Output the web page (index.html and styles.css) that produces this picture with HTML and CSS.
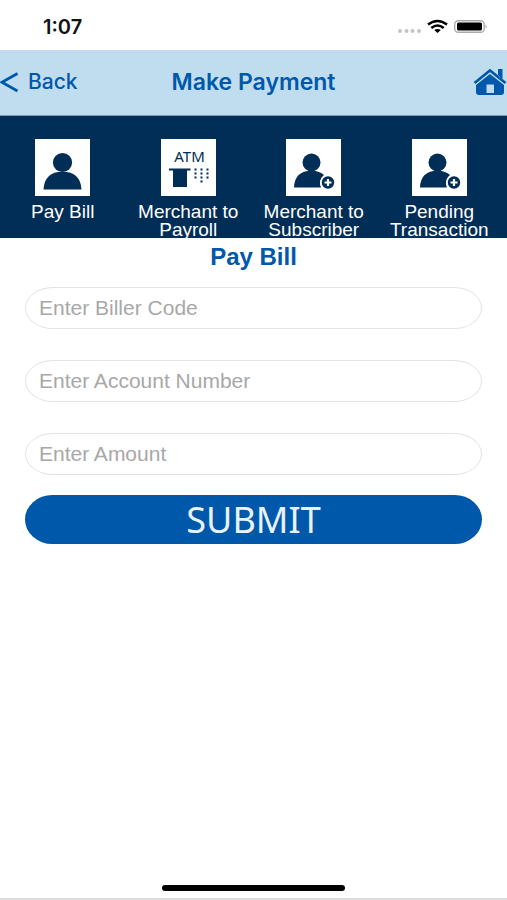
FILE: index.html
```html
<!DOCTYPE html>
<html lang="en">
<head>
<meta charset="utf-8">
<meta name="viewport" content="width=device-width, initial-scale=1">
<title>Make Payment</title>
<link rel="stylesheet" href="styles.css">
</head>
<body>
<div class="status">
  <span class="time">1:07</span>
  <svg class="signals" width="92" height="16" viewBox="0 0 92 16" aria-hidden="true">
    <g fill="#c4c4c4"><circle cx="4" cy="12" r="2"/><circle cx="10.500" cy="12" r="2"/><circle cx="16.500" cy="12" r="2"/><circle cx="23" cy="12" r="2"/></g>
    <g fill="none" stroke="#000" stroke-width="2.600"><path d="M32 5.500Q41.500-1.500 51 5.500"/><path d="M35.300 9Q41.500 4 47.700 9"/></g>
    <path d="M38.200 11Q41.500 8.800 44.800 11L41.500 14Z"/>
    <rect x="58.700" y="1.700" width="29.500" height="11.600" rx="3.600" fill="#fff" stroke="#aaa" stroke-width="1.400"/>
    <rect x="61" y="3.500" width="25" height="8" rx="1.500"/>
    <path d="M89.700 5.500Q91.500 7.500 89.700 9.500Z" fill="#999"/>
  </svg>
</div>
<header class="nav">
  <a class="back" href="#">
    <svg width="20" height="22" viewBox="0 0 20 22" aria-hidden="true"><path d="M17.500 2.500L2 11.200L17.500 20" fill="none" stroke="currentColor" stroke-width="2.800"/></svg>
    <span>Back</span>
  </a>
  <h1>Make Payment</h1>
  <a class="home" href="#" aria-label="Home">
    <svg width="34" height="28" viewBox="0 0 34 28" aria-hidden="true">
      <path d="M25 1H29.500V11L25 7Z" fill="currentColor"/>
      <path d="M1.500 15L17 2.500L32.500 15" fill="none" stroke="currentColor" stroke-width="2.600"/>
      <path fill="currentColor" fill-rule="evenodd" d="M17 6L31 17V24Q31 27 28 27H6Q3 27 3 24V17ZM13.500 16.500V25H21V16.500Z"/>
    </svg>
  </a>
</header>
<nav class="tabs">
  <a href="#">
    <svg class="tile" viewBox="0 0 55 57" aria-hidden="true"><path fill="#fff" d="M0 0H55V57H0Z"/><circle cx="27.500" cy="23.500" r="9.600"/><path d="M8.500 50.500Q9.500 33 27.500 32.500Q45.500 33 46.500 50.500Z"/></svg>
    <span>Pay Bill</span>
  </a>
  <a href="#">
    <svg class="tile" viewBox="0 0 55 57" aria-hidden="true"><path fill="#fff" d="M0 0H55V57H0Z"/><text x="28.500" y="23" text-anchor="middle">ATM</text><path d="M8 29.500H29.500V31.500H26V48H12V31.500H8Z"/><path d="M34.500 29.500V40M40.500 29.500V44M46.500 29.500V40" fill="none" stroke="#002e57" stroke-width="2" stroke-dasharray="2 2"/></svg>
    <span>Merchant to Payroll</span>
  </a>
  <a href="#">
    <svg class="tile" viewBox="0 0 55 57" aria-hidden="true"><path fill="#fff" d="M0 0H55V57H0Z"/><circle cx="25.500" cy="23.500" r="9"/><path d="M8 48.500Q8.500 32 25.500 31.500Q34 32 38 36Q32 42 35 48.500Z"/><circle cx="42" cy="43.500" r="8" fill="#fff"/><circle cx="42" cy="43.500" r="6.200"/><path d="M42 40V47M38.500 43.500H45.500" stroke="#fff" stroke-width="2.200"/></svg>
    <span>Merchant to Subscriber</span>
  </a>
  <a href="#">
    <svg class="tile" viewBox="0 0 55 57" aria-hidden="true"><path fill="#fff" d="M0 0H55V57H0Z"/><circle cx="25.500" cy="23.500" r="9"/><path d="M8 48.500Q8.500 32 25.500 31.500Q34 32 38 36Q32 42 35 48.500Z"/><circle cx="42" cy="43.500" r="8" fill="#fff"/><circle cx="42" cy="43.500" r="6.200"/><path d="M42 40V47M38.500 43.500H45.500" stroke="#fff" stroke-width="2.200"/></svg>
    <span>Pending Transaction</span>
  </a>
</nav>
<main>
  <h2>Pay Bill</h2>
  <form>
    <input type="text" aria-label="Biller code" placeholder="Enter Biller Code">
    <input type="text" aria-label="Account number" placeholder="Enter Account Number">
    <input type="text" aria-label="Amount" placeholder="Enter Amount">
    <button type="button">SUBMIT</button>
  </form>
</main>
<footer><div class="indicator"></div></footer>
</body>
</html>
```
FILE: styles.css
```css
* {
  box-sizing: border-box;
}

body {
  margin: 0;
  min-height: 100vh;
  display: flex;
  flex-direction: column;
  background: #fff;
  color: #0058aa;
  font-family: "Liberation Sans", sans-serif;
}

a {
  color: inherit;
  text-decoration: none;
}

h1,
h2 {
  margin: 0;
  font-weight: 600;
}

.status {
  display: flex;
  justify-content: space-between;
  align-items: center;
  height: 50px;
  padding: 3px 19px 0 43px;
  color: #111;
}

.time {
  font: 600 20px/24px Inter, sans-serif;
}

.nav {
  display: grid;
  grid-template-columns: 1fr auto 1fr;
  align-items: center;
  height: 66px;
  padding-bottom: 2px;
  background: #bfddef;
  border-bottom: 1px solid #8799aa;
  font-family: Inter, sans-serif;
}

.back {
  display: flex;
  align-items: center;
  gap: 8px;
  font-size: 21px;
  font-weight: 500;
}

.nav h1 {
  font-size: 23px;
  line-height: 28px;
}

.home {
  justify-self: end;
  display: flex;
}

.tabs {
  display: grid;
  grid-template-columns: repeat(4, 1fr);
  height: 122px;
  padding: 23px 5px 0 0;
  background: #002e57;
  color: #fff;
}

.tabs a {
  display: flex;
  flex-direction: column;
  align-items: center;
  gap: 7px;
  font-size: 19px;
  line-height: 18px;
  text-align: center;
}

.tile {
  width: 55px;
  height: 57px;
  flex: none;
  fill: #002e57;
}

.tile text {
  font: 15px "Noto Sans", sans-serif;
}

main {
  flex: 1;
}

h2 {
  font: 600 24px/38px "Liberation Sans", sans-serif;
  text-align: center;
}

form {
  display: flex;
  flex-direction: column;
  padding: 11px 25px 0;
}

input {
  width: 100%;
  height: 42px;
  margin-bottom: 31px;
  padding: 0 13px;
  border: 1px solid #e3e3e3;
  border-radius: 28px / 21px;
  background: #fff;
  color: #333;
  font: 21px "Liberation Sans", sans-serif;
}

input:last-of-type {
  margin-bottom: 20px;
}

input::placeholder {
  color: #a8a8a8;
  opacity: 1;
}

button {
  width: 100%;
  height: 49px;
  padding: 0;
  border: 0;
  border-radius: 28px / 25px;
  background: #0058aa;
  color: #e8f2fb;
  font: 36px/49px "Noto Sans", sans-serif;
}

footer {
  display: flex;
  justify-content: center;
  padding-bottom: 7px;
  border-bottom: 2px solid #dcdcdc;
}

.indicator {
  width: 36%;
  height: 6px;
  border-radius: 3px;
  background: #000;
}
```
